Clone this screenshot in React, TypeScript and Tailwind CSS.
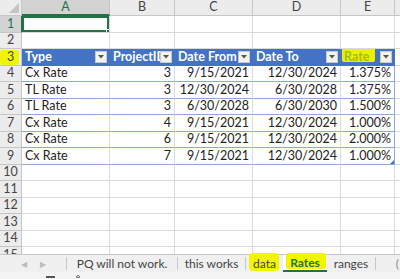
import React from "react";

const COLS = [
  { key: "A", w: "w-[88px]" },
  { key: "B", w: "w-[65px]" },
  { key: "C", w: "w-[78px]" },
  { key: "D", w: "w-[88px]" },
  { key: "E", w: "w-[54px]" },
];

const HEADERS = ["Type", "ProjectID", "Date From", "Date To", "Rate"];

const DATA: string[][] = [
  ["Cx Rate", "3", "9/15/2021", "12/30/2024", "1.375%"],
  ["TL Rate", "3", "12/30/2024", "6/30/2028", "1.375%"],
  ["TL Rate", "3", "6/30/2028", "6/30/2030", "1.500%"],
  ["Cx Rate", "4", "9/15/2021", "12/30/2024", "1.000%"],
  ["Cx Rate", "6", "9/15/2021", "12/30/2024", "2.000%"],
  ["Cx Rate", "7", "9/15/2021", "12/30/2024", "1.000%"],
];

const rowH = (n: number) => (n % 2 === 1 ? "h-[17px]" : "h-[16px]");

const FilterButton = () => (
  <span className="absolute right-[2px] top-[2px] w-[12px] h-[12px] bg-[#f3f3f3] border border-[#c8c8c8] flex items-center justify-center">
    <svg width="6" height="4" viewBox="0 0 6 4">
      <path d="M0 0h6L3 3.5z" fill="#555" />
    </svg>
  </span>
);

const RowLabel = ({ n, active, marked }: { n: number; active?: boolean; marked?: boolean }) => (
  <div
    className={`relative w-[22px] shrink-0 flex items-center justify-center border-b border-r text-[12.5px] ${
      active
        ? "bg-[#d3d3d3] text-[#217346] border-r-[#217346] border-b-[#c6c6c6]"
        : "bg-[#ececec] text-[#444] border-[#c6c6c6]"
    }`}
  >
    {marked && <span className="absolute left-0 top-[1px] w-[19px] h-[15px] rounded-[3px] bg-[#f2f500]" />}
    <span className="relative">{n}</span>
  </div>
);

const Cell = ({
  col,
  children,
  right,
  className = "",
}: {
  col: number;
  children?: React.ReactNode;
  right?: boolean;
  className?: string;
}) => (
  <div
    className={`relative shrink-0 ${COLS[col].w} border-r px-[3px] flex items-center overflow-hidden whitespace-nowrap ${
      right ? "justify-end" : ""
    } ${className}`}
  >
    {children}
  </div>
);

export default function App() {
  return (
    <div
      className="w-[400px] h-[279px] overflow-hidden bg-white flex flex-col text-[#222]"
      style={{ fontFamily: "Lato, 'Liberation Sans', sans-serif" }}
    >
      {/* column headers */}
      <div className="flex h-[16px] shrink-0">
        <div className="relative w-[22px] shrink-0 bg-[#ececec] border-r border-b border-[#c6c6c6]">
          <svg className="absolute right-[2px] bottom-[2px]" width="10" height="10" viewBox="0 0 10 10">
            <path d="M10 0V10H0z" fill="#c4c4c4" />
          </svg>
        </div>
        {COLS.map((c, i) => (
          <div
            key={c.key}
            className={`shrink-0 ${c.w} flex items-center justify-center border-r text-[12.5px] ${
              i === 0
                ? "bg-[#d3d3d3] text-[#217346] border-b-2 border-b-[#217346] border-r-[#c6c6c6]"
                : "bg-[#ececec] text-[#444] border-b border-[#c6c6c6]"
            }`}
          >
            {c.key}
          </div>
        ))}
        <div className="flex-1 bg-[#ececec] border-b border-[#c6c6c6]" />
      </div>

      {/* grid */}
      <div className="h-[238px] shrink-0 flex flex-col overflow-hidden text-[12.5px]">
        {Array.from({ length: 15 }, (_, idx) => {
          const n = idx + 1;
          const isHead = n === 3;
          const dataRow = n >= 4 && n <= 9 ? DATA[n - 4] : null;
          return (
            <div key={n} className={`flex shrink-0 ${rowH(n)}`}>
              <RowLabel n={n} active={n === 1} marked={n === 3} />
              {COLS.map((_, ci) => {
                if (isHead) {
                  return (
                    <Cell key={ci} col={ci} className="bg-[#4472c4] border-[#4472c4] font-bold text-white">
                      {ci === 4 ? (
                        <span className="relative">
                          <span className="absolute -left-[2px] -top-[1px] w-[33px] h-[15px] rounded-[2px] bg-[#e8f200]" />
                          <span className="relative text-[#a2bf12]">Rate</span>
                        </span>
                      ) : (
                        HEADERS[ci]
                      )}
                      <FilterButton />
                    </Cell>
                  );
                }
                if (dataRow) {
                  return (
                    <Cell
                      key={ci}
                      col={ci}
                      right={ci > 0}
                      className={`border-b border-b-[#8eaadb] ${ci === 4 ? "border-r-[#8eaadb]" : "border-r-[#dadada]"}`}
                    >
                      {dataRow[ci]}
                      {n === 9 && ci === 4 && (
                        <svg className="absolute right-0 bottom-0" width="4" height="4" viewBox="0 0 4 4">
                          <path d="M4 0V4H0z" fill="#4472c4" />
                        </svg>
                      )}
                    </Cell>
                  );
                }
                return (
                  <Cell key={ci} col={ci} className="border-b border-[#dadada]">
                    {n === 1 && ci === 0 && (
                      <>
                        <span className="absolute inset-0 border-2 border-[#217346]" />
                        <span className="absolute -right-[2px] -bottom-[2px] w-[5px] h-[5px] bg-[#217346] border border-white" />
                      </>
                    )}
                  </Cell>
                );
              })}
              <div className="flex-1 border-b border-[#dadada]" />
            </div>
          );
        })}
      </div>

      {/* sheet tabs */}
      <div className="h-[18px] shrink-0 flex items-stretch bg-[#f0f0f0] border-t border-[#c6c6c6] text-[12px] text-[#444]">
        <div className="w-[67px] shrink-0 flex items-center justify-center gap-[13px] border-r border-[#c6c6c6] my-[2px] text-[#bbb] text-[8px]">
          <span>◀</span>
          <span>▶</span>
        </div>
        <div className="w-[111px] shrink-0 flex items-center justify-center border-r border-[#c6c6c6] my-[2px]">
          PQ will not work.
        </div>
        <div className="w-[68px] shrink-0 flex items-center justify-center border-r border-[#c6c6c6] my-[2px]">
          this works
        </div>
        <div className="w-[37px] shrink-0 flex items-center justify-center">
          <span className="relative">
            <span className="absolute -left-[4px] -top-[2px] w-[30px] h-[18px] rounded-[4px] bg-[#f2f500]" />
            <span className="relative">data</span>
          </span>
        </div>
        <div className="w-[44px] shrink-0 flex items-center justify-center bg-white border-b-2 border-[#217346] font-bold text-[#217346]">
          <span className="relative">
            <span className="absolute -left-[4px] -top-[1px] w-[40px] h-[16px] rounded-[3px] bg-[#f2f500]" />
            <span className="relative">Rates</span>
          </span>
        </div>
        <div className="w-[49px] shrink-0 flex items-center justify-center border-r border-[#c6c6c6] my-[2px]">
          ranges
        </div>
        <div className="flex-1 flex items-center justify-end pr-[1px] text-[#888]">(</div>
      </div>

      {/* status bar edge */}
      <div className="flex-1 bg-[#f3f3f3] relative">
        <span className="absolute left-[46px] top-[4px] w-[9px] h-[2px] bg-[#555]" />
        <span className="absolute left-[76px] top-[3px] w-[4px] h-[3px] rounded-t-full border border-[#777]" />
      </div>
    </div>
  );
}
